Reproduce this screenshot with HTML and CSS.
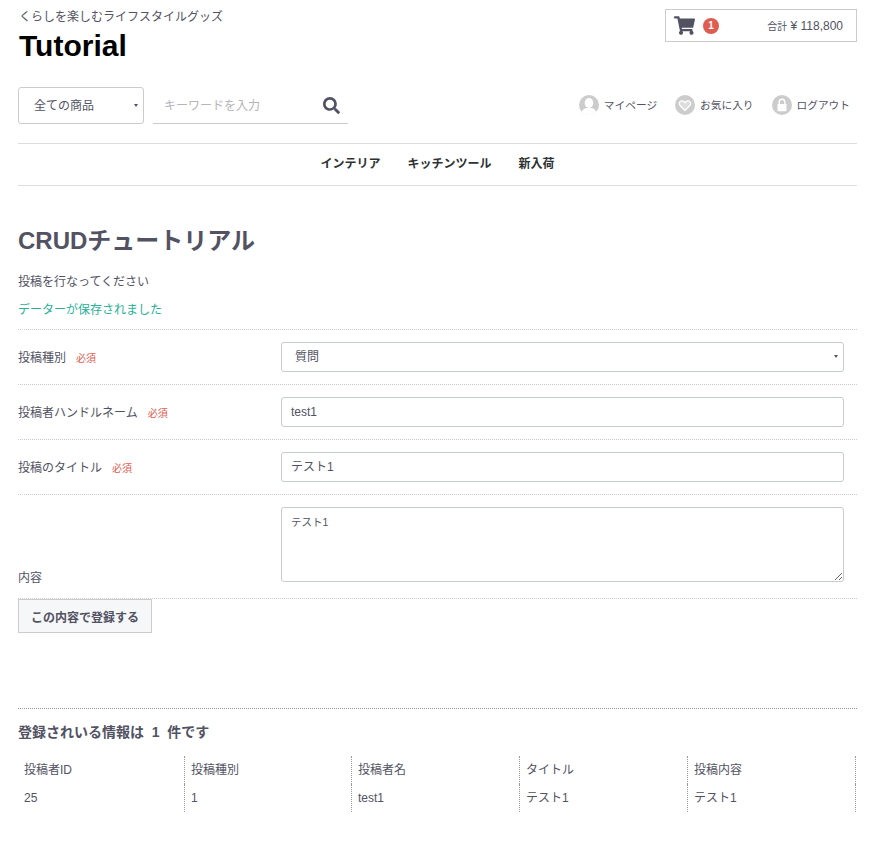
FILE: index.html
```html
<!DOCTYPE html>
<html lang="ja">
<head>
    <meta charset="UTF-8">
    <title>CRUDチュートリアル</title>
    <link rel="stylesheet" href="styles.css">
</head>
<body>
    <div class="container">
        <header class="header-top">
            <div class="brand">
                <p class="tagline">くらしを楽しむライフスタイルグッズ</p>
                <div class="logo">Tutorial</div>
            </div>
            <div class="cart">
                <svg class="cart-icon" viewBox="0 0 576 512"><path d="M528.12 301.319l47.273-208C578.806 78.301 567.391 64 551.99 64H159.208l-9.166-44.81C147.758 8.021 137.93 0 126.529 0H24C10.745 0 0 10.745 0 24v16c0 13.255 10.745 24 24 24h69.883l70.248 343.435C147.325 417.1 136 435.222 136 456c0 30.928 25.072 56 56 56s56-25.072 56-56c0-15.674-6.447-29.835-16.824-40h209.647C430.447 426.165 424 440.326 424 456c0 30.928 25.072 56 56 56s56-25.072 56-56c0-22.172-12.888-41.332-31.579-50.405l5.517-24.276c3.413-15.018-8.002-29.319-23.403-29.319H218.117l-6.545-32h293.145c11.206 0 20.92-7.754 23.403-18.681z"/></svg>
                <span class="cart-badge">1</span>
                <span class="cart-total"><small>合計</small> ¥ 118,800</span>
            </div>
        </header>

        <div class="header-search">
            <div class="search">
                <div class="select-wrap category">
                    <select><option>全ての商品</option></select>
                </div>
                <div class="keyword">
                    <input type="text" placeholder="キーワードを入力">
                    <svg class="search-icon" viewBox="0 0 512 512"><path d="M505 442.7L405.3 343c-4.5-4.5-10.6-7-17-7H372c27.6-35.3 44-79.7 44-128C416 93.1 322.9 0 208 0S0 93.1 0 208s93.1 208 208 208c48.3 0 92.7-16.4 128-44v16.3c0 6.4 2.5 12.5 7 17l99.7 99.7c9.4 9.4 24.6 9.4 33.9 0l28.3-28.3c9.4-9.4 9.4-24.6.1-34zM208 336c-70.7 0-128-57.2-128-128 0-70.7 57.2-128 128-128 70.7 0 128 57.2 128 128 0 70.7-57.2 128-128 128z"/></svg>
                </div>
            </div>
            <ul class="member-nav">
                <li>
                    <svg class="member-icon" viewBox="0 0 20 20"><circle cx="10" cy="10" r="10" fill="#ccc"/><ellipse cx="10" cy="8" rx="4.3" ry="5" fill="#fff"/><path d="M2.8 17c1-3 3.4-4.2 7.2-4.2s6.2 1.2 7.2 4.2a10 10 0 0 1-14.4 0z" fill="#fff"/></svg>
                    マイページ
                </li>
                <li>
                    <svg class="member-icon" viewBox="0 0 20 20"><circle cx="10" cy="10" r="10" fill="#ccc"/><path d="M10 15.5l-5-5c-1.5-1.6-.7-4.500 1.700-4.700 1.400-.1 2.600.6 3.300 1.900.7-1.300 1.900-2 3.300-1.900 2.400.2 3.200 3.100 1.700 4.700z" fill="#ddd" stroke="#fff" stroke-width="1.2"/></svg>
                    お気に入り
                </li>
                <li>
                    <svg class="member-icon" viewBox="0 0 20 20"><circle cx="10" cy="10" r="10" fill="#ccc"/><path d="M5.5 9h9v6.500a.8.8 0 0 1-.8.8H6.300a.8.8 0 0 1-.8-.8z" fill="#fff"/><path d="M7.2 9.500V7a2.800 2.800 0 0 1 5.600 0v2.500" fill="none" stroke="#fff" stroke-width="1.4"/></svg>
                    ログアウト
                </li>
            </ul>
        </div>

        <nav class="category-nav">
            <a href="#">インテリア</a>
            <a href="#">キッチンツール</a>
            <a href="#">新入荷</a>
        </nav>

        <h1 class="page-title">CRUDチュートリアル</h1>
        <p class="lead">投稿を行なってください</p>
        <p class="saved">データーが保存されました</p>

        <form class="post-form">
            <div class="form-row">
                <label>投稿種別<span class="required">必須</span></label>
                <div class="select-wrap field">
                    <select><option>質問</option></select>
                </div>
            </div>
            <div class="form-row">
                <label>投稿者ハンドルネーム<span class="required">必須</span></label>
                <input class="field" type="text" value="test1">
            </div>
            <div class="form-row">
                <label>投稿のタイトル<span class="required">必須</span></label>
                <input class="field field-kana" type="text" value="テスト1">
            </div>
            <div class="form-row form-row-text">
                <label>内容</label>
                <textarea class="field">テスト1</textarea>
            </div>
            <div class="form-submit">
                <button type="button">この内容で登録する</button>
            </div>
        </form>

        <section class="posts">
            <h2>登録されいる情報は&nbsp; 1&nbsp; 件です</h2>
            <table>
                <thead>
                    <tr>
                        <th>投稿者ID</th>
                        <th>投稿種別</th>
                        <th>投稿者名</th>
                        <th>タイトル</th>
                        <th>投稿内容</th>
                    </tr>
                </thead>
                <tbody>
                    <tr>
                        <td>25</td>
                        <td>1</td>
                        <td>test1</td>
                        <td>テスト1</td>
                        <td>テスト1</td>
                    </tr>
                </tbody>
            </table>
        </section>
    </div>
</body>
</html>
```

FILE: styles.css
```css
* {
    box-sizing: border-box;
}

body {
    font-family: "Liberation Sans", "Noto Sans CJK JP", sans-serif;
    color: #525263;
    background-color: #fff;
    font-size: 12px;
    margin: 0;
}

.container {
    width: 839px;
    margin-left: 18px;
}

.header-top {
    display: flex;
    justify-content: space-between;
    align-items: flex-start;
    height: 87px;
    padding-top: 10px;
}

.tagline {
    margin: 0;
    font-size: 12px;
    line-height: 14px;
    padding-left: 1px;
}

.logo {
    font-size: 30px;
    font-weight: 700;
    line-height: 38px;
    color: #000;
    padding-left: 1px;
    margin-top: 3px;
}

.cart {
    display: flex;
    align-items: center;
    width: 192px;
    height: 33px;
    margin-top: -1px;
    border: 1px solid #ccc;
    padding: 0 13px 0 8px;
}

.cart-icon {
    width: 21px;
    height: 19px;
    fill: #525263;
}

.cart-badge {
    width: 16px;
    height: 16px;
    margin-left: 8px;
    border-radius: 50%;
    background-color: #de5d50;
    color: #fff;
    font-size: 10px;
    font-weight: 700;
    line-height: 16px;
    text-align: center;
}

.cart-total {
    margin-left: auto;
    font-size: 12px;
}

.cart-total small {
    font-size: 10px;
}

.header-search {
    display: flex;
    justify-content: space-between;
    align-items: center;
    height: 37px;
}

.search {
    display: flex;
    gap: 9px;
}

.select-wrap {
    position: relative;
}

.select-wrap::after {
    content: "";
    position: absolute;
    right: 6px;
    top: 50%;
    margin-top: -2px;
    border-left: 2px solid transparent;
    border-right: 2px solid transparent;
    border-top: 3px solid #525263;
}

.select-wrap select {
    appearance: none;
    width: 100%;
    height: 100%;
    background-color: #fff;
    font-family: inherit;
    color: inherit;
    outline: none;
}

.category {
    width: 126px;
    height: 37px;
}

.category select {
    border: 1px solid #ccc;
    border-radius: 3px;
    padding-left: 15px;
    font-size: 12px;
}

.keyword {
    display: flex;
    align-items: center;
    width: 195px;
    height: 37px;
    border-bottom: 1px solid #ccc;
    padding-right: 8px;
}

.keyword input {
    flex: 1;
    min-width: 0;
    border: none;
    outline: none;
    padding: 1px 0 0 11px;
    font-family: inherit;
    font-size: 12px;
    color: inherit;
}

.keyword input::placeholder {
    color: #b4b4b9;
}

.search-icon {
    width: 17px;
    height: 17px;
    fill: #525263;
}

.member-nav {
    display: flex;
    gap: 18px;
    list-style: none;
    margin: 0;
    padding: 0 7px 2px 0;
    font-size: 10.7px;
}

.member-nav li {
    display: flex;
    align-items: center;
    gap: 5px;
}

.member-icon {
    width: 20px;
    height: 20px;
}

.category-nav {
    display: flex;
    justify-content: center;
    gap: 27px;
    height: 43px;
    margin-top: 19px;
    border-top: 1px solid #ddd;
    border-bottom: 1px solid #ddd;
    line-height: 40px;
    font-size: 12px;
    font-weight: 700;
}

.category-nav a {
    color: #2e3233;
    text-decoration: none;
}

.page-title {
    margin: 39px 0 0;
    font-size: 24px;
    line-height: 32px;
    font-weight: 700;
}

.lead {
    margin: 16px 0 0;
    line-height: 18px;
}

.saved {
    margin: 10px 0 0;
    line-height: 18px;
    color: #25b097;
}

.post-form {
    margin-top: 10px;
}

.form-row {
    display: flex;
    align-items: center;
    height: 55px;
    padding: 12px 12px 12px 0;
    border-top: 1px dotted #ccc;
}

.form-row label {
    width: 263px;
    line-height: 14px;
    padding-top: 2px;
}

.form-row .field {
    width: 563px;
    height: 30px;
}

.required {
    margin-left: 10px;
    color: #de5d50;
    font-size: 10px;
}

input.field,
textarea.field,
.field select {
    border: 1px solid #c4ccce;
    border-radius: 3px;
    padding: 0 9px;
    font-family: inherit;
    font-size: 12px;
    line-height: 14px;
    color: inherit;
    outline: none;
}

input.field-kana {
    padding-bottom: 3px;
}

.field select {
    padding-left: 13px;
}

.form-row-text {
    align-items: flex-end;
    height: 104px;
    padding-bottom: 12px;
}

.form-row-text label {
    line-height: 16px;
    padding-top: 0;
}

.form-row textarea.field {
    height: 75px;
    padding-top: 7px;
    margin-bottom: 4px;
    align-self: flex-start;
    font-size: 10.5px;
}

.form-submit {
    border-top: 1px dotted #ccc;
}

.form-submit button {
    display: block;
    width: 134px;
    height: 34px;
    border: 1px solid #ccc;
    background-color: #f5f7f8;
    font-family: inherit;
    font-size: 12px;
    font-weight: 700;
    color: #525263;
}

.posts {
    margin-top: 75px;
    border-top: 1px dotted #999;
}

.posts h2 {
    margin: 14px 0 0;
    font-size: 14px;
    line-height: 18px;
    font-weight: 700;
}

.posts table {
    width: 838px;
    margin-top: 15px;
    border-collapse: separate;
    border-spacing: 0;
    table-layout: fixed;
}

.posts th:nth-child(-n+2) {
    width: 167px;
}

.posts th,
.posts td {
    padding: 0 0 0 6px;
    border-right: 1px dotted #999;
    text-align: left;
    font-weight: 400;
    font-size: 12px;
    line-height: 14px;
}

.posts th {
    height: 28px;
    padding-bottom: 1px;
}

.posts td {
    height: 28px;
}
```
